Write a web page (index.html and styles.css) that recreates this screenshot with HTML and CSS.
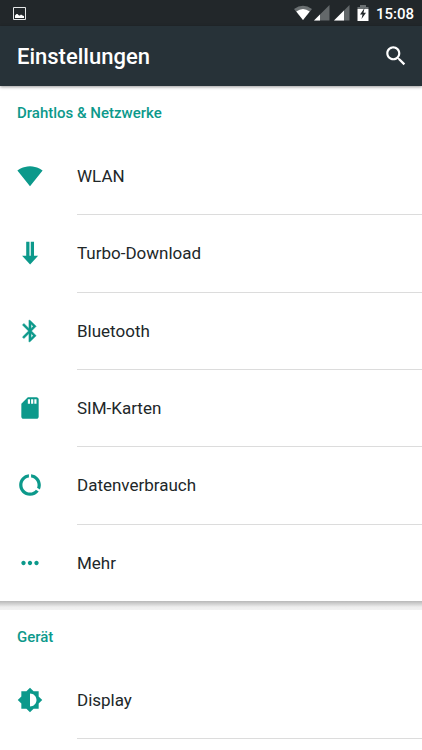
FILE: index.html
```html
<!DOCTYPE html>
<html lang="de">
<head>
<meta charset="utf-8">
<meta name="viewport" content="width=device-width, initial-scale=1">
<title>Einstellungen</title>
<link rel="stylesheet" href="styles.css">
</head>
<body>
<div class="status-bar">
  <svg class="status-picture" viewBox="0 0 13 13" aria-hidden="true"><path d="M.5.5h12v12H.5z" fill="none" stroke="#e4e6e7"/><path d="M2 11V8.500l1.500-1.500h1l1.500 1.500h1l1-1 1.500 1L11 9v2z" fill="#fff"/></svg>
  <div class="status-right">
    <svg class="status-wifi" viewBox="0 0 20 16" aria-hidden="true"><path d="M1 4Q10-2.500 19 4L10 15z" fill="#6b7072"/><path d="M3.300 6.500Q10 1.500 16.700 6.500L10 15z" fill="#fff"/></svg>
    <svg class="status-signal" viewBox="0 0 16 16" aria-hidden="true"><path d="M0 15.500L15.500 0v15.500z" fill="#63686a"/><path d="M0 15.500L6 9.500v6z" fill="#fff"/></svg>
    <svg class="status-signal status-signal-second" viewBox="0 0 16 16" aria-hidden="true"><path d="M0 15.500L15.500 0v15.500z" fill="#63686a"/><path d="M0 15.500L10 5.500v10z" fill="#fff"/></svg>
    <svg class="status-battery" viewBox="0 0 12 16" aria-hidden="true"><path d="M3 0h6v2h2.500v2H.5V2H3z" fill="#6b7072"/><path d="M.5 4h11v12H.5z" fill="#fff"/><path d="M7.500 3L3 9.500h2.500L4.500 14 9 7.800H6.500z" fill="#22272a"/></svg>
    <time class="clock">15:08</time>
  </div>
</div>
<header class="app-bar">
  <h1 class="app-title">Einstellungen</h1>
  <button class="search-button" type="button" aria-label="Suchen">
    <svg class="icon" viewBox="0 0 24 24"><path d="M15.500 14h-.79l-.28-.27C15.410 12.590 16 11.110 16 9.500 16 5.910 13.090 3 9.500 3S3 5.910 3 9.500 5.910 16 9.500 16c1.610 0 3.090-.59 4.230-1.570l.27.28v.79l5 4.990L20.490 19l-4.990-5zm-6 0C7.010 14 5 11.990 5 9.500S7.010 5 9.500 5 14 7.010 14 9.500 11.990 14 9.500 14z"/></svg>
  </button>
</header>
<main>
  <section class="card">
    <h2 class="section-title">Drahtlos &amp; Netzwerke</h2>
    <nav class="list list-network" aria-label="Drahtlos &amp; Netzwerke">
      <a class="row" href="#wlan">
        <svg class="icon" viewBox="0 0 24 24"><path d="M12.010 21.490L23.640 7c-.45-.34-4.930-4-11.640-4C5.280 3 .81 6.660.36 7l11.630 14.490z"/></svg>
        <span class="label">WLAN</span>
      </a>
      <a class="row" href="#turbo">
        <svg class="icon" viewBox="0 0 24 24"><path d="M8.500 1.500h3v13.500h-3zM12.700 1.500h3v13.500h-3zM4.700 14.500h14.800L12.100 22.500z"/></svg>
        <span class="label">Turbo-Download</span>
      </a>
      <a class="row" href="#bluetooth">
        <svg class="icon" viewBox="0 0 24 24"><path d="M17.710 7.710L12 2h-1v7.590L6.410 5 5 6.410 10.590 12 5 17.590 6.410 19 11 14.410V22h1l5.710-5.710-4.300-4.290 4.300-4.290zM13 5.830l1.880 1.880L13 9.590V5.830zm1.880 10.460L13 18.170v-3.760l1.880 1.880z" stroke="currentColor" stroke-width=".4"/></svg>
        <span class="label">Bluetooth</span>
      </a>
      <a class="row" href="#sim">
        <svg class="icon" viewBox="0 0 24 24"><path d="M18 2h-8L4.020 8 4 20c0 1.100.9 2 2 2h12c1.100 0 2-.9 2-2V4c0-1.100-.9-2-2-2zm-6 6h-2V4h2v4zm3 0h-2V4h2v4zm3 0h-2V4h2v4z"/></svg>
        <span class="label">SIM-Karten</span>
      </a>
      <a class="row" href="#daten">
        <svg class="icon" viewBox="0 0 24 24"><path d="M13 2.050v3.030c3.390.49 6 3.390 6 6.920 0 .9-.18 1.750-.48 2.540l2.600 1.530c.56-1.240.88-2.620.88-4.070 0-5.180-3.950-9.450-9-9.950zM12 19c-3.870 0-7-3.130-7-7 0-3.530 2.610-6.430 6-6.920V2.050c-5.060.5-9 4.760-9 9.950 0 5.520 4.470 10 9.990 10 3.310 0 6.240-1.610 8.060-4.090l-2.600-1.530C16.170 17.980 14.210 19 12 19z"/></svg>
        <span class="label">Datenverbrauch</span>
      </a>
      <a class="row" href="#mehr">
        <svg class="icon" viewBox="0 0 24 24"><path d="M6 10c-1.100 0-2 .9-2 2s.9 2 2 2 2-.9 2-2-.9-2-2-2zm12 0c-1.100 0-2 .9-2 2s.9 2 2 2 2-.9 2-2-.9-2-2-2zm-6 0c-1.100 0-2 .9-2 2s.9 2 2 2 2-.9 2-2-.9-2-2-2z"/></svg>
        <span class="label">Mehr</span>
      </a>
    </nav>
  </section>
  <div class="card-gap"></div>
  <section class="card">
    <h2 class="section-title">Gerät</h2>
    <nav class="list" aria-label="Gerät">
      <a class="row" href="#display">
        <svg class="icon" viewBox="0 0 24 24"><path d="M20 15.310L23.310 12 20 8.690V4h-4.690L12 .69 8.690 4H4v4.690L.69 12 4 15.310V20h4.690L12 23.310 15.310 20H20v-4.690zM12 18V6c3.310 0 6 2.690 6 6s-2.690 6-6 6z"/></svg>
        <span class="label">Display</span>
      </a>
    </nav>
    <div class="row-end"></div>
  </section>
</main>
</body>
</html>
```
FILE: styles.css
```css
* {
  box-sizing: border-box;
}

body {
  margin: 0;
  background: #ffffff;
  color: #212729;
  font-family: Roboto, "Liberation Sans", sans-serif;
}

.status-bar {
  display: flex;
  align-items: center;
  justify-content: space-between;
  height: 26px;
  padding: 0 8px 0 13px;
  background: #22272a;
  color: #ffffff;
}

.status-picture {
  width: 13px;
  height: 13px;
}

.status-right {
  display: flex;
  align-items: center;
}

.status-wifi {
  width: 20px;
  height: 16px;
}

.status-signal {
  width: 16px;
  height: 16px;
  margin-left: 1px;
}

.status-signal-second {
  margin-left: 4px;
}

.status-battery {
  width: 12px;
  height: 16px;
  margin: 0 7px;
}

.clock {
  padding-top: 2px;
  font-size: 15px;
  font-weight: 500;
  line-height: 24px;
}

.app-bar {
  position: relative;
  display: flex;
  align-items: center;
  justify-content: space-between;
  height: 60px;
  padding: 0 13px 0 17px;
  background: #273238;
  color: #ffffff;
  box-shadow: 0 1px 3px rgba(0, 0, 0, 0.4);
}

.app-title {
  margin: 0;
  padding-top: 2px;
  font-size: 22px;
  font-weight: 500;
  line-height: 28px;
}

.search-button {
  display: flex;
  padding: 0;
  border: 0;
  background: none;
  color: inherit;
}

.icon {
  flex: none;
  width: 26px;
  height: 26px;
  fill: currentColor;
}

.card {
  background: #ffffff;
}

.card-gap {
  height: 9px;
  background: linear-gradient(#b8b8b8, #d2d2d2 3px, #eeeeee 6px, #f2f2f2);
}

.section-title {
  margin: 0;
  padding: 17px 17px 14px;
  color: #0c998b;
  font-size: 15px;
  font-weight: 500;
  line-height: 20px;
}

.list {
  display: grid;
  grid-auto-rows: minmax(77px, auto);
}

.list-network {
  grid-auto-rows: 1fr;
  min-height: 464px;
}

.row {
  display: grid;
  grid-template-columns: 60px 1fr;
  align-items: stretch;
  padding-left: 17px;
  color: #0c998b;
  text-decoration: none;
}

.row .icon {
  align-self: center;
  margin-top: 1px;
}

.label {
  display: flex;
  align-items: center;
  color: #212729;
  font-size: 17px;
  line-height: 24px;
}

.row + .row .label {
  border-top: 1px solid #dcdcdc;
}

.row-end {
  margin-left: 77px;
  border-top: 1px solid #dcdcdc;
}
```
